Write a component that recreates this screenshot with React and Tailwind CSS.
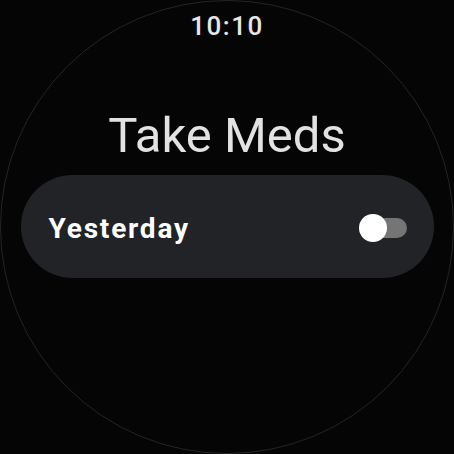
export default function App() {
  return (
    <div className="w-[454px] h-[454px] bg-[#050505] overflow-hidden" style={{ fontFamily: "Roboto, 'Noto Sans', sans-serif" }}>
      <div className="w-[454px] h-[454px] rounded-full border border-[#242424] flex flex-col items-center">
        {/* time */}
        <div className="mt-[12px] text-[26px] leading-[26px] text-[#e6e6e6] font-medium tracking-[1.5px]">10:10</div>

        {/* title */}
        <h1 className="mt-[72px] text-[49px] leading-[49px] text-[#e2e2e2]">Take Meds</h1>

        {/* toggle chip */}
        <div className="mt-[15px] w-[413px] h-[103px] rounded-full bg-[#222327] flex items-center justify-between pl-[28px] pr-[27px]">
          <span className="text-[28px] leading-[28px] mt-[4px] font-bold text-white tracking-[1.8px]">Yesterday</span>
          <div className="relative w-[48px] h-[28px] mt-[2px]">
            <div className="absolute right-0 top-[4px] w-[36px] h-[20px] rounded-full bg-[#757575]" />
            <div className="absolute left-0 top-0 w-[28px] h-[28px] rounded-full bg-white" />
          </div>
        </div>
      </div>
    </div>
  );
}
